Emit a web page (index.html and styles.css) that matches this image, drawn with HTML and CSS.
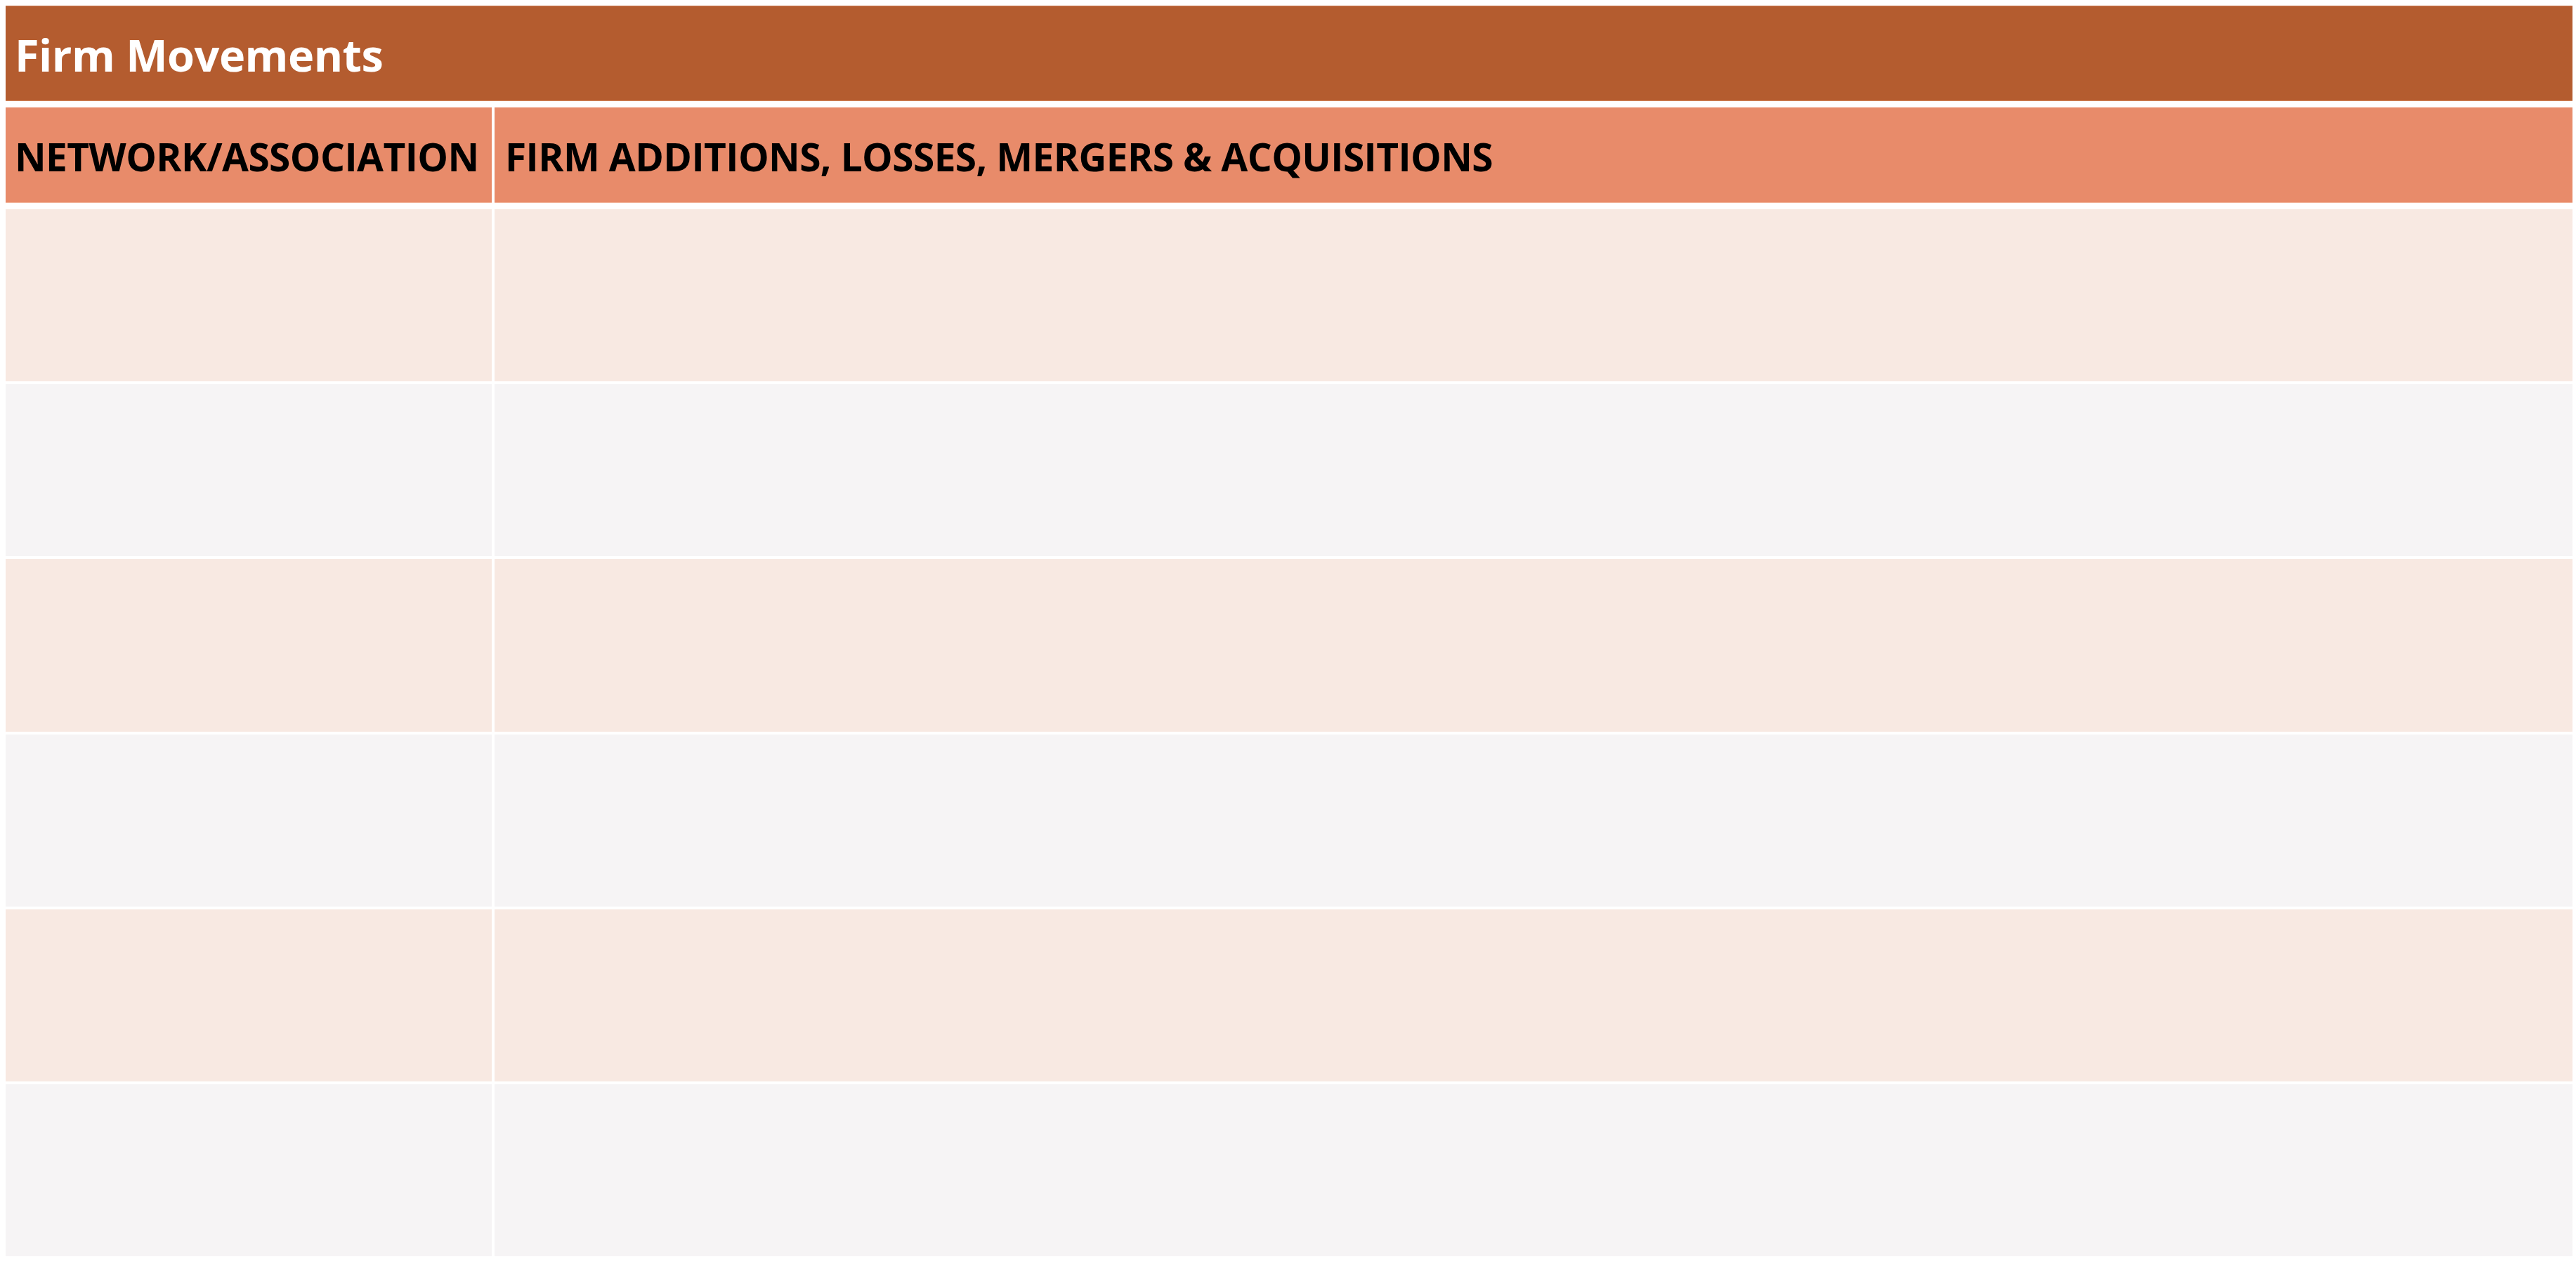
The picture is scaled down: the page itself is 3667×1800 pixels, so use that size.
FILE: index.html
```html
<!DOCTYPE html>
<html lang="en">
<head>
<meta charset="utf-8">
<title>Firm Movements</title>
<link rel="stylesheet" href="styles.css">
</head>
<body>
<div class="sheet">
  <div class="title">Firm Movements</div>
  <div class="head">
    <div class="th th-first">NETWORK/ASSOCIATION</div>
    <div class="th th-second">FIRM ADDITIONS, LOSSES, MERGERS &amp; ACQUISITIONS</div>
  </div>
  <div class="body">
    <div class="td odd"></div><div class="td odd"></div>
    <div class="td even"></div><div class="td even"></div>
    <div class="td odd"></div><div class="td odd"></div>
    <div class="td even"></div><div class="td even"></div>
    <div class="td odd"></div><div class="td odd"></div>
    <div class="td even"></div><div class="td even"></div>
  </div>
</div>
</body>
</html>
```

FILE: styles.css
```css
html, body {
  margin: 0;
  padding: 0;
  background: #ffffff;
}
body {
  padding: 8px 5px 0 8px;
  font-family: "Open Sans", "Liberation Sans", sans-serif;
}
.sheet {
  width: 3654px;
  display: flex;
  flex-direction: column;
}
.title {
  box-sizing: border-box;
  height: 136px;
  margin-bottom: 9px;
  padding: 2px 0 0 13px;
  background: #b45c2f;
  border-top: 1px solid #cc7a52;
  border-bottom: 1px solid #d4865a;
  color: #ffffff;
  font-weight: 700;
  font-size: 63px;
  letter-spacing: -0.5px;
  display: flex;
  align-items: center;
}
.head {
  display: grid;
  grid-template-columns: 692px 1fr;
  column-gap: 4px;
  height: 136px;
  margin-bottom: 9px;
}
.th {
  box-sizing: border-box;
  background: #e88b6a;
  border-bottom: 1px solid #f1b49b;
  color: #000000;
  font-weight: 700;
  font-size: 55px;
  letter-spacing: -0.6px;
  display: flex;
  align-items: center;
  padding-top: 3px;
}
.th-first { padding-left: 13px; }
.th-second { padding-left: 15px; }
.body {
  display: grid;
  grid-template-columns: 692px 1fr;
  grid-template-rows: repeat(6, 1fr);
  column-gap: 4px;
  row-gap: 4px;
  height: 1491px;
}
.td.odd { background: #f8e9e2; }
.td.even { background: #f6f4f5; }
```
